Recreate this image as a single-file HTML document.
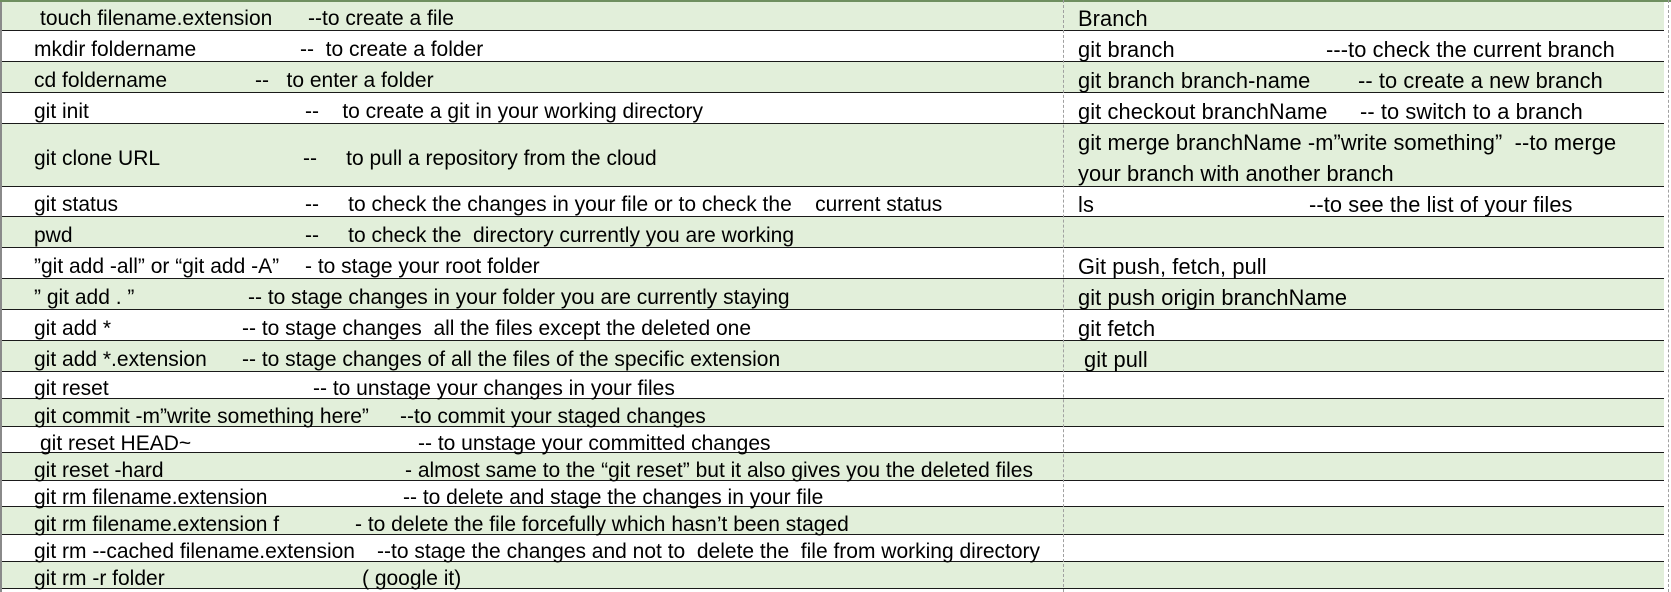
<!DOCTYPE html>
<html><head><meta charset="utf-8"><style>
*{margin:0;padding:0;box-sizing:border-box}
body{width:1671px;height:592px;background:#fff;position:relative;overflow:hidden;font-family:"Liberation Sans",Arial,sans-serif;font-size:21px;color:#000}
.r{position:absolute;left:2px;width:1662px;border-bottom:1.5px solid #1a1a1a}
.g{background:#e2efda}
.t{position:absolute;white-space:pre;line-height:1;margin-top:2px}
.c{font-family:"Liberation Sans",sans-serif;font-size:21.8px;letter-spacing:0.1px}
#lb{position:absolute;left:0;top:0;width:2px;height:592px;background:#8a8a8a}
#tb{position:absolute;left:0;top:0;width:1671px;height:2px;background:#6f8f60}
#dv{position:absolute;left:1063px;top:0;height:592px;border-left:1px dashed #a0a0a0}
#rb{position:absolute;left:1668px;top:0;height:592px;border-left:1.5px dashed #a0a0a0}
</style></head><body>
<div class="r g" style="top:0;height:31px"></div>
<div class="r" style="top:31px;height:31px"></div>
<div class="r g" style="top:62px;height:31px"></div>
<div class="r" style="top:93px;height:31px"></div>
<div class="r g" style="top:124px;height:63px"></div>
<div class="r" style="top:187px;height:30px"></div>
<div class="r g" style="top:217px;height:31px"></div>
<div class="r" style="top:248px;height:31px"></div>
<div class="r g" style="top:279px;height:31px"></div>
<div class="r" style="top:310px;height:31px"></div>
<div class="r g" style="top:341px;height:31px"></div>
<div class="r" style="top:372px;height:27px"></div>
<div class="r g" style="top:399px;height:28px"></div>
<div class="r" style="top:427px;height:26px"></div>
<div class="r g" style="top:453px;height:28px"></div>
<div class="r" style="top:481px;height:26px"></div>
<div class="r g" style="top:507px;height:28px"></div>
<div class="r" style="top:535px;height:27px"></div>
<div class="r g" style="top:562px;height:27px"></div>
<div id="lb"></div><div id="tb"></div><div id="dv"></div><div id="rb"></div>

<span class="t" style="left:40px;top:6px">touch filename.extension</span><span class="t" style="left:308px;top:6px">--to create a file</span>
<span class="t" style="left:34px;top:37px">mkdir foldername</span><span class="t" style="left:300px;top:37px">--  to create a folder</span>
<span class="t" style="left:34px;top:68px">cd foldername</span><span class="t" style="left:255px;top:68px">--   to enter a folder</span>
<span class="t" style="left:34px;top:99px">git init</span><span class="t" style="left:305px;top:99px">--    to create a git in your working directory</span>
<span class="t" style="left:34px;top:146px">git clone URL</span><span class="t" style="left:303px;top:146px">--     to pull a repository from the cloud</span>
<span class="t" style="left:34px;top:192px">git status</span><span class="t" style="left:305px;top:192px">--     to check the changes in your file or to check the    current status</span>
<span class="t" style="left:34px;top:223px">pwd</span><span class="t" style="left:305px;top:223px">--     to check the  directory currently you are working</span>
<span class="t" style="left:34px;top:254px">”git add -all” or “git add -A”</span><span class="t" style="left:305px;top:254px">- to stage your root folder</span>
<span class="t" style="left:34px;top:285px">” git add . ”</span><span class="t" style="left:248px;top:285px">-- to stage changes in your folder you are currently staying</span>
<span class="t" style="left:34px;top:316px">git add *</span><span class="t" style="left:242px;top:316px">-- to stage changes  all the files except the deleted one</span>
<span class="t" style="left:34px;top:347px">git add *.extension</span><span class="t" style="left:242px;top:347px">-- to stage changes of all the files of the specific extension</span>
<span class="t" style="left:34px;top:376px">git reset</span><span class="t" style="left:313px;top:376px">-- to unstage your changes in your files</span>
<span class="t" style="left:34px;top:404px">git commit -m”write something here”</span><span class="t" style="left:400px;top:404px">--to commit your staged changes</span>
<span class="t" style="left:40px;top:431px">git reset HEAD~</span><span class="t" style="left:418px;top:431px">-- to unstage your committed changes</span>
<span class="t" style="left:34px;top:458px">git reset -hard</span><span class="t" style="left:405px;top:458px">- almost same to the “git reset” but it also gives you the deleted files</span>
<span class="t" style="left:34px;top:485px">git rm filename.extension</span><span class="t" style="left:403px;top:485px">-- to delete and stage the changes in your file</span>
<span class="t" style="left:34px;top:512px">git rm filename.extension f</span><span class="t" style="left:355px;top:512px">- to delete the file forcefully which hasn’t been staged</span>
<span class="t" style="left:34px;top:539px">git rm --cached filename.extension</span><span class="t" style="left:377px;top:539px">--to stage the changes and not to  delete the  file from working directory</span>
<span class="t" style="left:34px;top:566px">git rm -r folder</span><span class="t" style="left:362px;top:566px">( google it)</span>

<span class="t c" style="left:1078px;top:6px">Branch</span>
<span class="t c" style="left:1078px;top:37px">git branch</span><span class="t c" style="left:1326px;top:37px">---to check the current branch</span>
<span class="t c" style="left:1078px;top:68px">git branch branch-name</span><span class="t c" style="left:1358px;top:68px">-- to create a new branch</span>
<span class="t c" style="left:1078px;top:99px">git checkout branchName</span><span class="t c" style="left:1360px;top:99px">-- to switch to a branch</span>
<span class="t c" style="left:1078px;top:130px">git merge branchName -m”write something”  --to merge</span>
<span class="t c" style="left:1078px;top:161px">your branch with another branch</span>
<span class="t c" style="left:1078px;top:192px">ls</span><span class="t c" style="left:1309px;top:192px">--to see the list of your files</span>
<span class="t c" style="left:1078px;top:254px">Git push, fetch, pull</span>
<span class="t c" style="left:1078px;top:285px">git push origin branchName</span>
<span class="t c" style="left:1078px;top:316px">git fetch</span>
<span class="t c" style="left:1084px;top:347px">git pull</span>
</body></html>
